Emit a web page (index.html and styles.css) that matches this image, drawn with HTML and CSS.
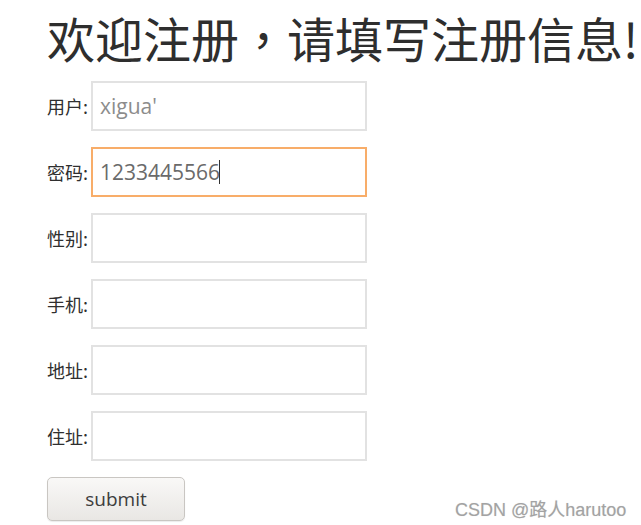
FILE: index.html
```
<!DOCTYPE html>
<html lang="zh">
<head>
<meta charset="utf-8">
<title>注册</title>
<link rel="stylesheet" href="styles.css">
</head>
<body>
<div class="page">
  <h1 class="title">欢迎注册<span class="comma" lang="zh-Hant-TW">，</span>请填写注册信息!</h1>
  <form class="form" action="#">
    <div class="row"><label class="label">用户:</label><input class="field light" type="text" value="xigua'"></div>
    <div class="row"><label class="label">密码:</label><span class="field-wrap"><input class="field focused" type="text" value="1233445566"><span class="caret"></span></span></div>
    <div class="row"><label class="label">性别:</label><input class="field" type="text"></div>
    <div class="row"><label class="label">手机:</label><input class="field" type="text"></div>
    <div class="row"><label class="label">地址:</label><input class="field" type="text"></div>
    <div class="row"><label class="label">住址:</label><input class="field" type="text"></div>
    <div class="actions"><button class="submit" type="button">submit</button></div>
  </form>
  <div class="watermark">CSDN @路人harutoo</div>
</div>
</body>
</html>
```
FILE: styles.css
```
html, body {
  margin: 0;
  padding: 0;
  background: #ffffff;
}
.page {
  position: relative;
  width: 641px;
  height: 525px;
  overflow: hidden;
  padding-left: 47px;
  box-sizing: border-box;
  font-family: "Open Sans", "Noto Sans CJK SC", sans-serif;
  color: #333;
}
.title {
  margin: 0;
  padding-top: 11px;
  height: 70px;
  box-sizing: border-box;
  font-family: "Noto Sans CJK SC", sans-serif;
  font-weight: 400;
  font-size: 48px;
  line-height: 52px;
  color: #2e2e2e;
  white-space: nowrap;
  letter-spacing: 0;
}
.comma {
  font-family: "Noto Sans CJK TC", sans-serif;
}
.form {
  display: flex;
  flex-direction: column;
  gap: 16px;
  margin-top: 11px;
}
.row {
  display: flex;
  align-items: center;
  height: 50px;
}
.label {
  font-family: "Noto Sans CJK SC", sans-serif;
  font-size: 18px;
  color: #2f2f2f;
  width: 44px;
  white-space: nowrap;
}
.field-wrap {
  position: relative;
  display: block;
}
.field {
  width: 276px;
  height: 50px;
  box-sizing: border-box;
  border: 2px solid #e2e2e2;
  padding: 0 0 0 7px;
  margin: 0;
  font-family: "Open Sans", sans-serif;
  font-size: 21px;
  color: #6a6a6a;
  background: #fff;
  outline: none;
}
.field.light {
  color: #8c8c8c;
}
.field.focused {
  border-color: #f8ad69;
}
.caret {
  position: absolute;
  left: 128px;
  top: 13px;
  width: 1px;
  height: 24px;
  background: #333;
}
.actions {
  display: flex;
}
.submit {
  width: 138px;
  height: 44px;
  box-sizing: border-box;
  border: 1px solid #c9c6c2;
  border-radius: 5px;
  background: linear-gradient(#f9f8f7, #e9e7e4);
  font-family: "Open Sans", sans-serif;
  font-size: 19px;
  color: #3d3d3d;
  padding: 0;
  box-shadow: 0 1px 1px rgba(0,0,0,0.08);
}
.watermark {
  position: absolute;
  left: 455px;
  top: 495px;
  font-family: "Liberation Sans", "Noto Sans CJK SC", sans-serif;
  font-size: 18px;
  color: #a3a3a3;
  white-space: nowrap;
  text-shadow: 0 0 1px rgba(0,0,0,0.15);
}
```
